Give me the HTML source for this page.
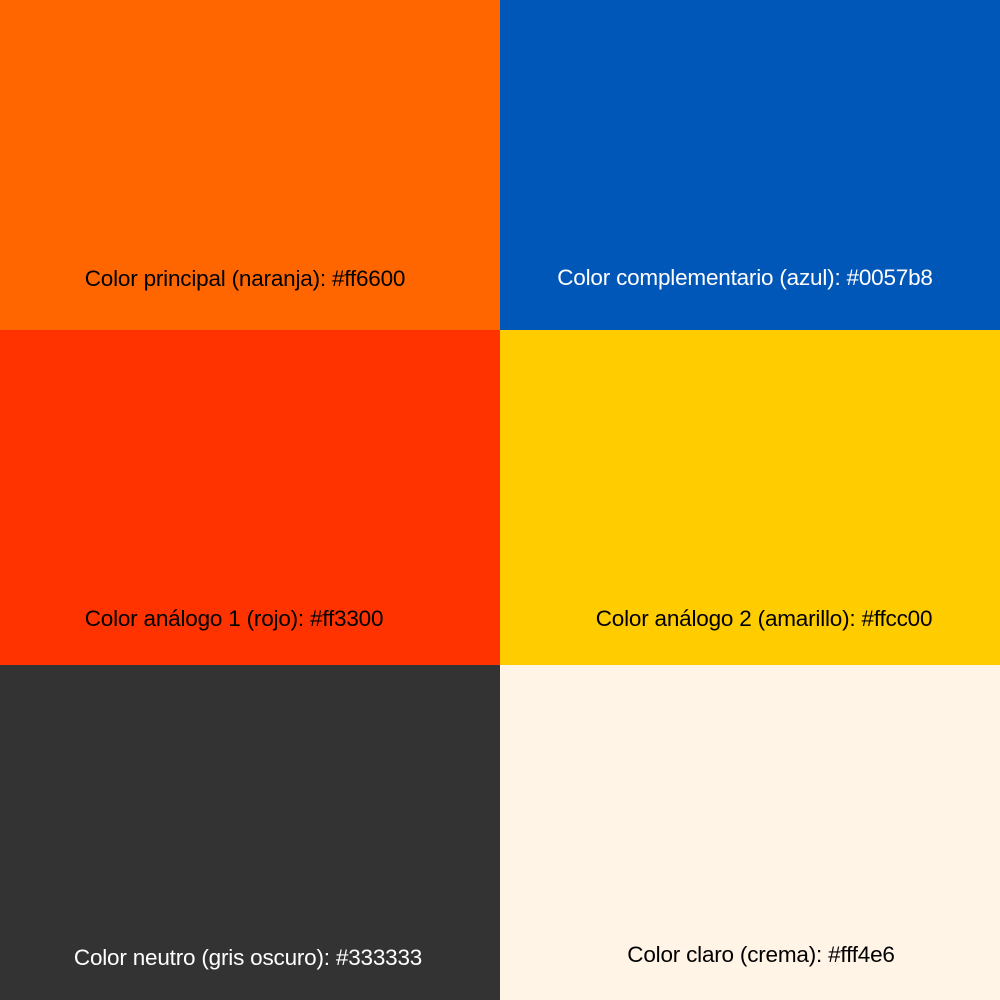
<!DOCTYPE html>
<html><head><meta charset="utf-8"><style>
html,body{margin:0;padding:0;width:1000px;height:1000px;overflow:hidden}
.b{position:absolute}
.t{position:absolute;font-family:"Liberation Sans",sans-serif;font-size:22.5px;white-space:nowrap;transform:translate(-50%,-50%);letter-spacing:-0.2px}
</style></head><body>
<div class="b" style="left:0;top:0;width:500px;height:330px;background:#ff6600"></div>
<div class="b" style="left:500px;top:0;width:500px;height:330px;background:#0057b8"></div>
<div class="b" style="left:0;top:330px;width:500px;height:335px;background:#ff3300"></div>
<div class="b" style="left:500px;top:330px;width:500px;height:335px;background:#ffcc00"></div>
<div class="b" style="left:0;top:665px;width:500px;height:335px;background:#333333"></div>
<div class="b" style="left:500px;top:665px;width:500px;height:335px;background:#fff4e6"></div>
<div class="t" style="left:245px;top:279px;color:#000">Color principal (naranja): #ff6600</div>
<div class="t" style="left:745px;top:278px;color:#fff">Color complementario (azul): #0057b8</div>
<div class="t" style="left:234px;top:619px;color:#000">Color análogo 1 (rojo): #ff3300</div>
<div class="t" style="left:764px;top:619px;color:#000">Color análogo 2 (amarillo): #ffcc00</div>
<div class="t" style="left:248px;top:958px;color:#fff">Color neutro (gris oscuro): #333333</div>
<div class="t" style="left:761px;top:955px;color:#000">Color claro (crema): #fff4e6</div>
</body></html>
